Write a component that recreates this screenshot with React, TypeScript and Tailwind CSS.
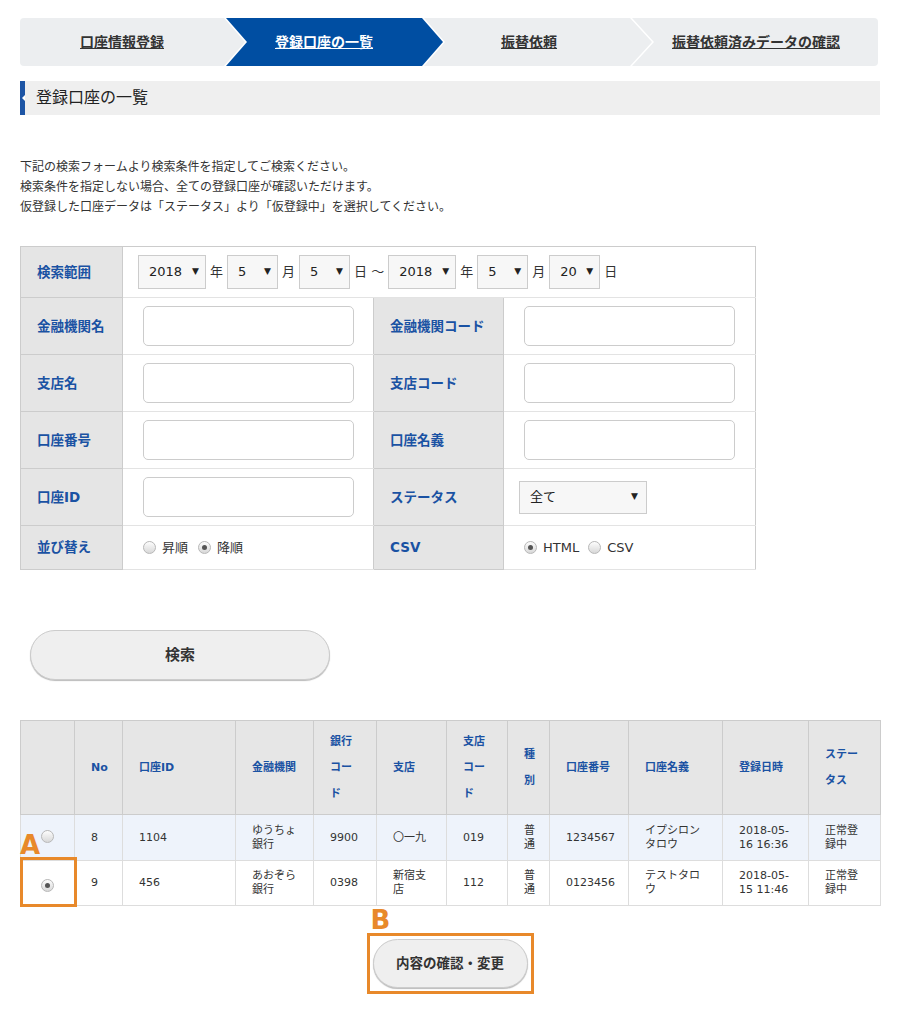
import React from "react";

const Select = ({ value, w }: { value: string; w: string }) => (
  <div className={`flex h-[34px] ${w} flex-none items-center justify-between border border-[#ccc] bg-[#f7f7f7] pl-[10px] pr-[6px] text-[13px] text-[#222]`}>
    <span>{value}</span>
    <span className="text-[9px]">▼</span>
  </div>
);

const Radio = ({ checked }: { checked?: boolean }) => (
  <span className="inline-flex h-[13px] w-[13px] flex-none items-center justify-center rounded-full border border-[#b8b8b8] bg-linear-to-b from-[#fdfdfd] to-[#d8d8d8]">
    {checked && <span className="h-[5px] w-[5px] rounded-full bg-[#555]" />}
  </span>
);

const TextInput = () => (
  <input className="h-10 w-[211px] rounded-[5px] border border-[#ccc] bg-white outline-none" />
);

const labelCls = "border border-[#ccc] bg-[#e5e5e5] pl-4 text-left text-[13.5px] font-bold text-[#1a52a3]";
const valueCls = "border-b border-[#e3e3e3] pl-5";

const headers = ["", "No", "口座ID", "金融機関", "銀行コード", "支店", "支店コード", "種別", "口座番号", "口座名義", "登録日時", "ステータス"];

const rows = [
  { no: "8", id: "1104", bank: "ゆうちょ銀行", code: "9900", branch: "〇一九", bcode: "019", type: "普通", num: "1234567", name: "イプシロンタロウ", date: ["2018-05-", "16 16:36"], status: "正常登録中", checked: false },
  { no: "9", id: "456", bank: "あおぞら銀行", code: "0398", branch: "新宿支店", bcode: "112", type: "普通", num: "0123456", name: "テストタロウ", date: ["2018-05-", "15 11:46"], status: "正常登録中", checked: true },
];

const chevron = "[clip-path:polygon(0_0,calc(100%_-_21px)_0,100%_50%,calc(100%_-_21px)_100%,0_100%,21px_50%)]";

export default function App() {
  return (
    <div className="min-h-[1030px] w-[910px] bg-white pl-5 pt-[18px] text-[#333] [font-family:'DejaVu_Sans','Noto_Sans_CJK_JP',sans-serif]">
      {/* stepper */}
      <div className="flex h-12 w-[858px] rounded-sm bg-[#eceef0] text-[14px] font-bold">
        <div className="flex w-[204px] flex-none items-center justify-center">
          <span className="underline">口座情報登録</span>
        </div>
        <div className={`w-[221px] flex-none bg-white px-[2px] ${chevron}`}>
          <div className={`flex h-full items-center justify-center bg-[#004ea2] pr-[21px] text-white ${chevron}`}>
            <span className="underline">登録口座の一覧</span>
          </div>
        </div>
        <div className="flex w-[185px] flex-none items-center justify-center pr-[17px]">
          <span className="underline">振替依頼</span>
        </div>
        <div className="w-6 flex-none bg-white [clip-path:polygon(0_0,2px_0,100%_50%,2px_100%,0_100%,calc(100%_-_2px)_50%)]" />
        <div className="flex flex-1 items-center justify-center pr-5">
          <span className="underline">振替依頼済みデータの確認</span>
        </div>
      </div>

      {/* heading */}
      <div className="mt-[15px] flex h-[34px] w-[860px] items-center bg-[#efefef]">
        <div className="flex h-full w-[5px] items-center bg-[#1d55a5] pl-[2px]">
          <span className="border-y-[3px] border-r-[3px] border-y-transparent border-r-white" />
        </div>
        <h2 className="ml-[11px] text-[16px] text-[#222]">登録口座の一覧</h2>
      </div>

      <div className="mt-[42px] text-[12px] leading-[20px] text-[#333]">
        <p>下記の検索フォームより検索条件を指定してご検索ください。</p>
        <p>検索条件を指定しない場合、全ての登録口座が確認いただけます。</p>
        <p>仮登録した口座データは「ステータス」より「仮登録中」を選択してください。</p>
      </div>

      {/* search form */}
      <table className="mt-[29px] w-[735px] table-fixed border-collapse border border-[#ccc]">
        <colgroup>
          <col className="w-[102px]" />
          <col className="w-[251px]" />
          <col className="w-[130px]" />
          <col className="w-[252px]" />
        </colgroup>
        <tbody>
          <tr className="h-[51px]">
            <th className={labelCls}>検索範囲</th>
            <td colSpan={3} className="border-b border-[#e3e3e3] pl-[15px]">
              <div className="flex items-center gap-[4px] text-[13px]">
                <Select value="2018" w="w-[68px]" />
                <span>年</span>
                <Select value="5" w="w-[51px]" />
                <span>月</span>
                <Select value="5" w="w-[51px]" />
                <span>日 ～</span>
                <Select value="2018" w="w-[68px]" />
                <span>年</span>
                <Select value="5" w="w-[51px]" />
                <span>月</span>
                <Select value="20" w="w-[51px]" />
                <span>日</span>
              </div>
            </td>
          </tr>
          <tr className="h-[57px]">
            <th className={labelCls}>金融機関名</th>
            <td className={valueCls}><TextInput /></td>
            <th className={labelCls}>金融機関コード</th>
            <td className={valueCls}><TextInput /></td>
          </tr>
          <tr className="h-[57px]">
            <th className={labelCls}>支店名</th>
            <td className={valueCls}><TextInput /></td>
            <th className={labelCls}>支店コード</th>
            <td className={valueCls}><TextInput /></td>
          </tr>
          <tr className="h-[57px]">
            <th className={labelCls}>口座番号</th>
            <td className={valueCls}><TextInput /></td>
            <th className={labelCls}>口座名義</th>
            <td className={valueCls}><TextInput /></td>
          </tr>
          <tr className="h-[57px]">
            <th className={labelCls}>口座ID</th>
            <td className={valueCls}><TextInput /></td>
            <th className={labelCls}>ステータス</th>
            <td className="border-b border-[#e3e3e3] pl-[15px]">
              <div className="flex h-[33px] w-[128px] items-center justify-between border border-[#ccc] bg-[#f7f7f7] pl-[10px] pr-[8px] text-[13px] text-[#222]">
                <span>全て</span>
                <span className="text-[9px]">▼</span>
              </div>
            </td>
          </tr>
          <tr className="h-[44px]">
            <th className={labelCls}>並び替え</th>
            <td className={valueCls}>
              <div className="flex items-center text-[13px]">
                <Radio />
                <span className="ml-[6px] mr-[10px]">昇順</span>
                <Radio checked />
                <span className="ml-[6px]">降順</span>
              </div>
            </td>
            <th className={labelCls}>CSV</th>
            <td className={valueCls}>
              <div className="flex items-center text-[13px]">
                <Radio checked />
                <span className="ml-[6px] mr-[9px]">HTML</span>
                <Radio />
                <span className="ml-[6px]">CSV</span>
              </div>
            </td>
          </tr>
        </tbody>
      </table>

      <button className="ml-[10px] mt-[60px] flex h-[50px] w-[300px] items-center justify-center rounded-full border border-[#ccc] bg-[#efefef] text-[15px] font-bold text-[#333] shadow-[0_1px_1px_#bbb]">
        検索
      </button>

      {/* results */}
      <div className="relative mt-10 w-[860px]">
        <table className="w-[860px] table-fixed border-collapse border border-[#ccc]">
          <colgroup>
            <col className="w-[54px]" />
            <col className="w-[48px]" />
            <col className="w-[113px]" />
            <col className="w-[78px]" />
            <col className="w-[63px]" />
            <col className="w-[70px]" />
            <col className="w-[61px]" />
            <col className="w-[42px]" />
            <col className="w-[79px]" />
            <col className="w-[94px]" />
            <col className="w-[86px]" />
            <col className="w-[72px]" />
          </colgroup>
          <thead>
            <tr className="h-[94px]">
              {headers.map((h, i) => (
                <th key={i} className="border border-[#ccc] bg-[#e6e6e6] px-4 text-left align-middle text-[11px] font-bold leading-[26px] text-[#1a52a3]">
                  {h}
                </th>
              ))}
            </tr>
          </thead>
          <tbody>
            {rows.map((r, i) => (
              <tr key={r.no} className={i === 0 ? "h-[46px] bg-[#eef3fb]" : "h-[45px] bg-white"}>
                <td className="border border-[#ddd] text-center align-middle">
                  <span className="inline-flex"><Radio checked={r.checked} /></span>
                </td>
                {[r.no, r.id, r.bank, r.code, r.branch, r.bcode, r.type, r.num, r.name].map((v, j) => (
                  <td key={j} className="border border-[#ddd] px-4 text-[11px] leading-[14px] text-[#333]">{v}</td>
                ))}
                <td className="border border-[#ddd] px-4 text-[11px] leading-[14px] text-[#333]">
                  {r.date[0]}<br />{r.date[1]}
                </td>
                <td className="border border-[#ddd] px-4 text-[11px] leading-[14px] text-[#333]">{r.status}</td>
              </tr>
            ))}
          </tbody>
        </table>

        {/* annotation A */}
        <span className="absolute left-0 top-[112px] text-[26px] font-bold leading-none text-[#e8892a]">A</span>
        <div className="absolute left-0 top-[137px] h-[50px] w-[57px] border-[3px] border-[#e8892a]" />
      </div>

      <div className="mt-[27px] flex w-[860px] justify-center">
        <div className="relative border-[3px] border-[#e8892a] p-[3px]">
          <span className="absolute left-[1px] top-[-29px] text-[26px] font-bold leading-none text-[#e8892a]">B</span>
          <button className="flex h-[49px] w-[155px] items-center justify-center rounded-full border border-[#ccc] bg-[#efefef] text-[13.5px] font-bold text-[#333] shadow-[0_1px_1px_#bbb]">
            内容の確認・変更
          </button>
        </div>
      </div>
    </div>
  );
}
